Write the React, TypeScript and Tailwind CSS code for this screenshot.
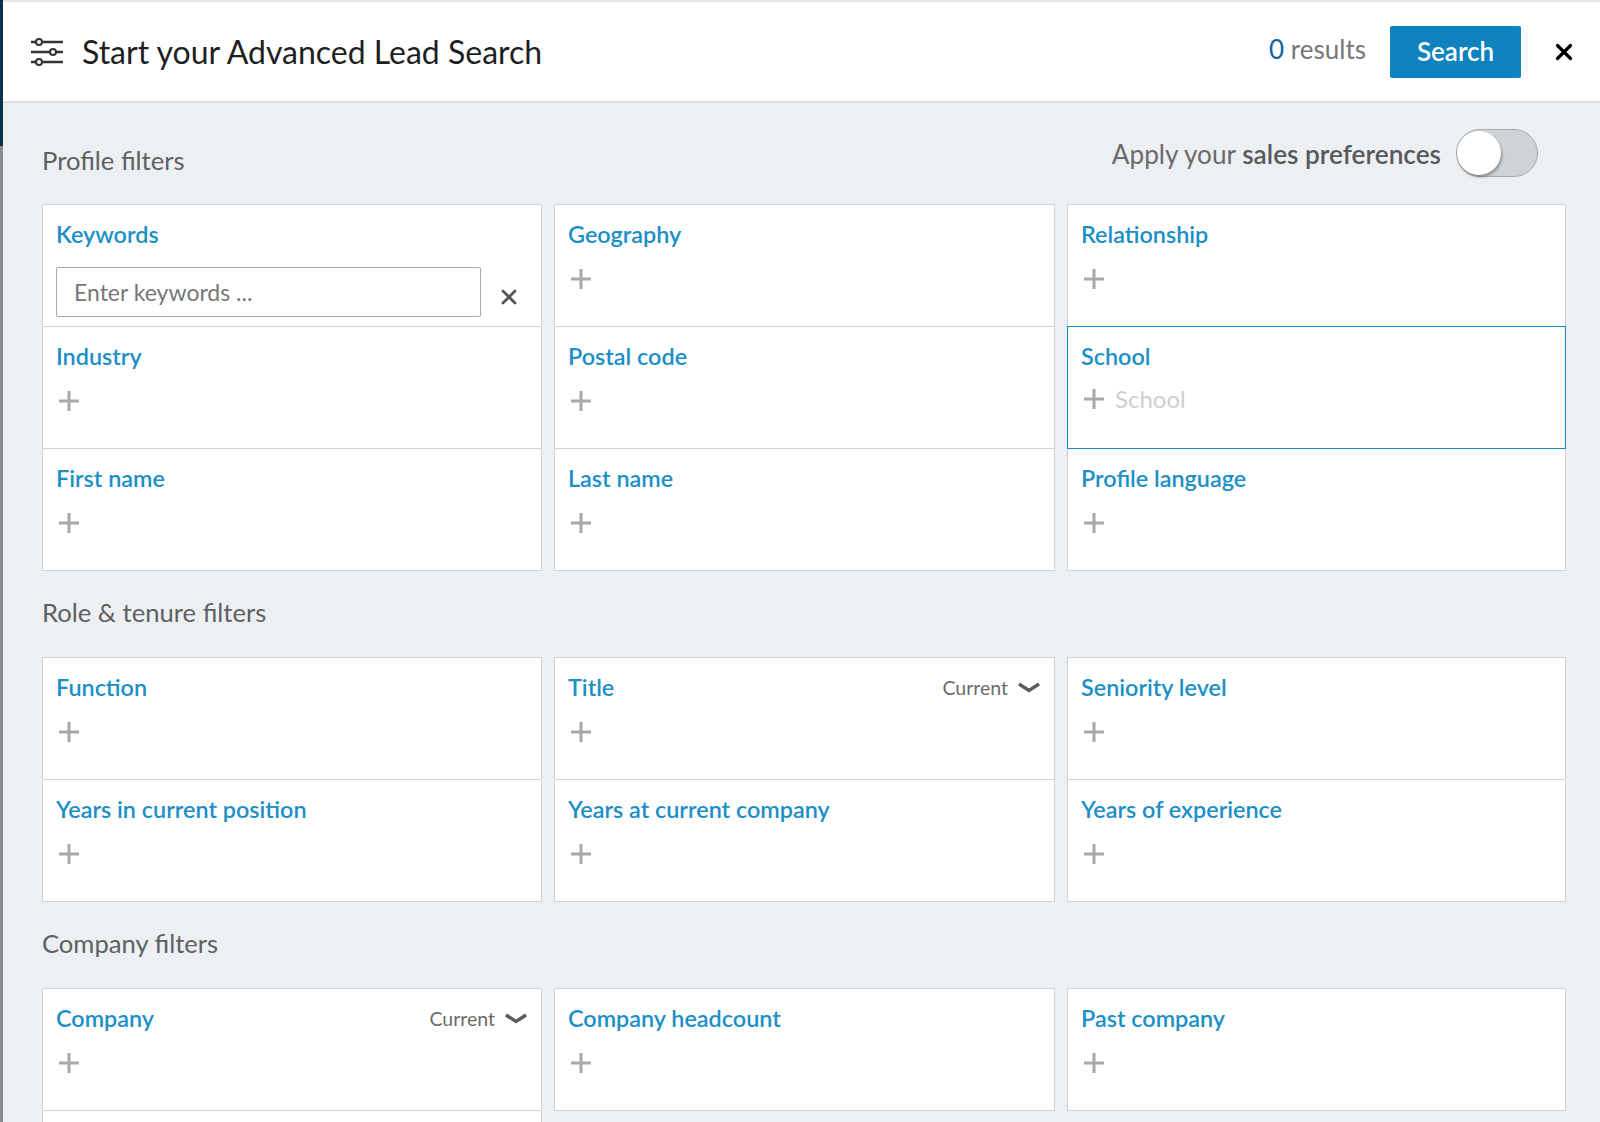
import { X } from "lucide-react";

type Filter = { name: string; current?: boolean; typing?: boolean; keywords?: boolean };

const profileFilters: Filter[] = [
  { name: "Keywords", keywords: true },
  { name: "Geography" },
  { name: "Relationship" },
  { name: "Industry" },
  { name: "Postal code" },
  { name: "School", typing: true },
  { name: "First name" },
  { name: "Last name" },
  { name: "Profile language" },
];

const roleFilters: Filter[] = [
  { name: "Function" },
  { name: "Title", current: true },
  { name: "Seniority level" },
  { name: "Years in current position" },
  { name: "Years at current company" },
  { name: "Years of experience" },
];

const companyFilters: Filter[] = [
  { name: "Company", current: true },
  { name: "Company headcount" },
  { name: "Past company" },
  { name: "" },
];

function SlidersIcon() {
  return (
    <svg width="32" height="28" viewBox="0 0 32 28" fill="none" stroke="#333" strokeWidth="2.4">
      <path d="M0 4h5M11 4h21M0 14h19M25 14h7M0 24h5M11 24h21" />
      <circle cx="8" cy="4" r="3" strokeWidth="2" />
      <circle cx="22" cy="14" r="3" strokeWidth="2" />
      <circle cx="8" cy="24" r="3" strokeWidth="2" />
    </svg>
  );
}

function Plus() {
  return (
    <svg width="22" height="22" viewBox="0 0 22 22" className="shrink-0" stroke="#a8a8a8" strokeWidth="3">
      <path d="M11 1v20M1 11h20" />
    </svg>
  );
}

function FilterCard({ filter }: { filter: Filter }) {
  return (
    <div
      className={`-mb-px h-[123px] border bg-white pl-[13px] pr-[14px] pt-[13px] ${
        filter.typing ? "relative z-10 border-[#1c87bd]" : "border-[#d0d3d6]"
      }`}
    >
      <div className="flex h-[33px] items-center justify-between">
        <span className="text-[23.4px] font-semibold leading-none text-[#1b8fc6]">{filter.name}</span>
        {filter.current && (
          <span className="flex items-center gap-[10px] text-[19.5px] leading-none text-[#6b6b6b]">
            Current
            <svg width="22" height="11" viewBox="0 0 22 11" fill="none" stroke="#5c5c5c" strokeWidth="3.4">
              <path d="M1 2l10 6.5L21 2" />
            </svg>
          </span>
        )}
      </div>
      {filter.keywords ? (
        <div className="mt-[16px] flex items-center">
          <input
            readOnly
            placeholder="Enter keywords ..."
            className="h-[50px] w-[425px] rounded-[2px] border border-[#a8a8a8] px-[17px] text-[23px] text-[#666] outline-none placeholder:text-[#777]"
          />
          <X size={24} strokeWidth={2.8} className="ml-[16px] mt-[9px] text-[#555]" />
        </div>
      ) : (
        filter.name && (
          <div className={`ml-[2px] flex h-[24px] items-center ${filter.typing ? "mt-[14px]" : "mt-[16px]"}`}>
            <Plus />
            {filter.typing && <span className="ml-[10px] text-[24px] leading-none text-[#cfcfcf]">School</span>}
          </div>
        )
      )}
    </div>
  );
}

function FilterGrid({ filters }: { filters: Filter[] }) {
  return (
    <div className="grid grid-cols-[500px_501px_499px] gap-x-[12px]">
      {filters.map((f, i) => (
        <FilterCard key={i} filter={f} />
      ))}
    </div>
  );
}

export default function App() {
  return (
    <div className="flex h-screen overflow-hidden bg-[#edf0f3] font-['Lato','Open_Sans',sans-serif]">
      {/* page behind the modal, just a sliver of it */}
      <div className="w-[3px] shrink-0 bg-gradient-to-b from-[#0c3048] from-[13%] to-[#8a8a8a] to-[13%]" />
      <div className="min-w-0 flex-1">
        <header className="flex h-[103px] items-center border-y-2 border-t-[#e6e6e6] border-b-[#dcdfe2] bg-white pl-[28px] pr-[23px]">
          <SlidersIcon />
          <h1 className="ml-[19px] text-[32px] font-normal text-[#1f1f1f]">Start your Advanced Lead Search</h1>
          <div className="ml-auto flex items-center">
            <span className="mb-[4px] text-[26px] text-[#777]">
              <span className="text-[#0b66a0]">0</span> results
            </span>
            <button className="ml-[24px] h-[52px] w-[131px] rounded-[2px] bg-[#0f83bd] text-[26px] font-semibold text-white">
              Search
            </button>
            <X size={26} strokeWidth={3} className="ml-[30px] text-black" />
          </div>
        </header>

        <main className="pl-[39px]">
          <div className="flex h-[101px] w-[1524px] items-start justify-between pr-[28px]">
            <h2 className="mt-[40px] text-[25.6px] leading-[34px] font-normal text-[#5f6062]">Profile filters</h2>
            <div className="mt-[26px] flex items-center gap-[15px]">
              <span className="relative top-[1px] text-[26.2px] leading-none text-[#6b6b6b]">
                Apply your <span className="font-semibold text-[#58595b]">sales preferences</span>
              </span>
              <div className="flex h-[48px] w-[82px] items-center rounded-full border border-[#a9abad] bg-[#d0d3d6]">
                <div className="h-[44px] w-[44px] rounded-full bg-white shadow-[1px_2px_3px_rgba(0,0,0,0.35)]" />
              </div>
            </div>
          </div>
          <FilterGrid filters={profileFilters} />

          <h2 className="mt-[25px] h-[62px] text-[25.6px] leading-[34px] font-normal text-[#5f6062]">Role &amp; tenure filters</h2>
          <FilterGrid filters={roleFilters} />

          <h2 className="mt-[25px] h-[62px] text-[25.6px] leading-[34px] font-normal text-[#5f6062]">Company filters</h2>
          <FilterGrid filters={companyFilters} />
        </main>
      </div>
    </div>
  );
}
